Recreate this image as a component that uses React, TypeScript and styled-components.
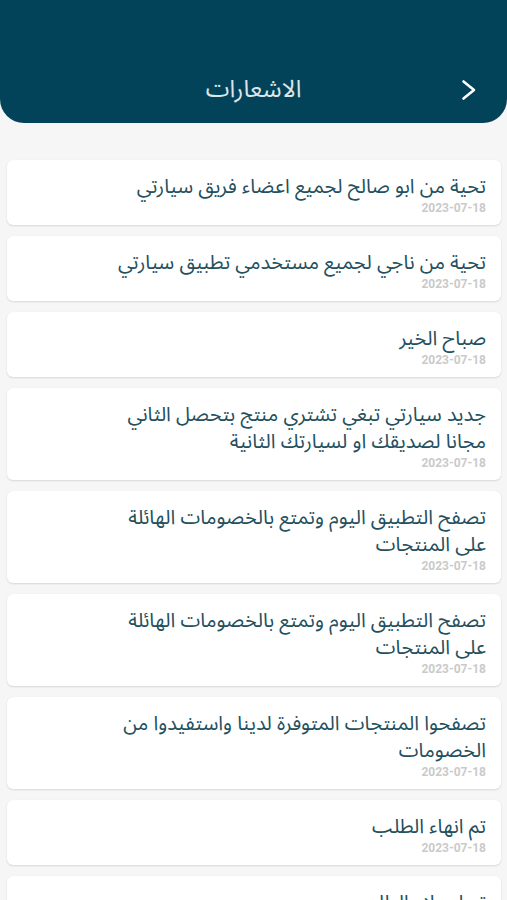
// NotificationsScreen - list of user notifications (RTL)

import type React from 'react';
import styled, { createGlobalStyle } from 'styled-components';

const GlobalStyle = createGlobalStyle`
	html, body {
		margin: 0;
		padding: 0;
		background: #f6f6f6;
	}

	body {
		font-family: "Noto Sans Arabic", "DejaVu Sans", "Noto Sans", sans-serif;
	}
`;

interface NotificationItem {
  id: number;
  title: string;
  date: string;
}

const notifications: NotificationItem[] = [
  { id: 1, title: 'تحية من ابو صالح لجميع اعضاء فريق سيارتي', date: '2023-07-18' },
  { id: 2, title: 'تحية من ناجي لجميع مستخدمي تطبيق سيارتي', date: '2023-07-18' },
  { id: 3, title: 'صباح الخير', date: '2023-07-18' },
  {
    id: 4,
    title: 'جديد سيارتي تبغي تشتري منتج بتحصل الثاني مجانا لصديقك او لسيارتك الثانية',
    date: '2023-07-18',
  },
  { id: 5, title: 'تصفح التطبيق اليوم وتمتع بالخصومات الهائلة على المنتجات', date: '2023-07-18' },
  { id: 6, title: 'تصفح التطبيق اليوم وتمتع بالخصومات الهائلة على المنتجات', date: '2023-07-18' },
  { id: 7, title: 'تصفحوا المنتجات المتوفرة لدينا واستفيدوا من الخصومات', date: '2023-07-18' },
  { id: 8, title: 'تم انهاء الطلب\u00a0', date: '2023-07-18' },
  { id: 9, title: 'تم استلام الطلب', date: '2023-07-18' },
];

const Screen = styled.div`
	min-height: 900px;
	background: #f6f6f6;
	direction: rtl;
`;

const Header = styled.header`
	height: 123px;
	box-sizing: border-box;
	background: #02435a;
	border-radius: 0 0 24px 24px;
	padding: 0 18px 13px;
	display: grid;
	grid-template-columns: 40px 1fr 40px;
	align-items: end;
`;

const BackButton = styled.button`
	height: 40px;
	display: flex;
	align-items: center;
	justify-content: center;
	background: none;
	border: none;
	padding: 0;
	cursor: pointer;
`;

const HeaderTitle = styled.h1`
	margin: 0;
	height: 40px;
	line-height: 40px;
	text-align: center;
	font-size: 24px;
	font-weight: 400;
	color: #dce5e9;
`;

const List = styled.div`
	display: flex;
	flex-direction: column;
	gap: 11px;
	padding: 37px 6px 0 7px;
`;

const Card = styled.div`
	background: #ffffff;
	border-radius: 6px;
	padding: 14px 15px 10px;
	box-shadow: 0 1px 2px rgba(0, 0, 0, 0.12), 0 0 1px rgba(0, 0, 0, 0.06);
`;

const CardTitle = styled.div`
	padding-left: 86px;
	font-size: 20px;
	line-height: 27px;
	color: #24505e;
	white-space: pre-wrap;
`;

const CardDate = styled.div`
	margin-top: 1px;
	font-family: Roboto, "Liberation Sans", sans-serif;
	font-size: 12px;
	line-height: 13px;
	font-weight: 700;
	color: #cacaca;
`;

const ChevronIcon = () => (
  <svg width="16" height="22" viewBox="0 0 16 22" fill="none">
    <polyline
      points="2.5,2.5 13,11 2.5,19.5"
      stroke="#ffffff"
      strokeWidth="2.6"
      strokeLinecap="round"
      strokeLinejoin="round"
    />
  </svg>
);

export const App: React.FC = () => {
  return (
    <Screen>
      <GlobalStyle />

      {/* Top bar */}
      <Header>
        <BackButton type="button" aria-label="Back">
          <ChevronIcon />
        </BackButton>
        <HeaderTitle>الاشعارات</HeaderTitle>
        <span />
      </Header>

      {/* Notifications */}
      <List>
        {notifications.map((item) => (
          <Card key={item.id}>
            <CardTitle>{item.title}</CardTitle>
            <CardDate>{item.date}</CardDate>
          </Card>
        ))}
      </List>
    </Screen>
  );
};

export default App;
